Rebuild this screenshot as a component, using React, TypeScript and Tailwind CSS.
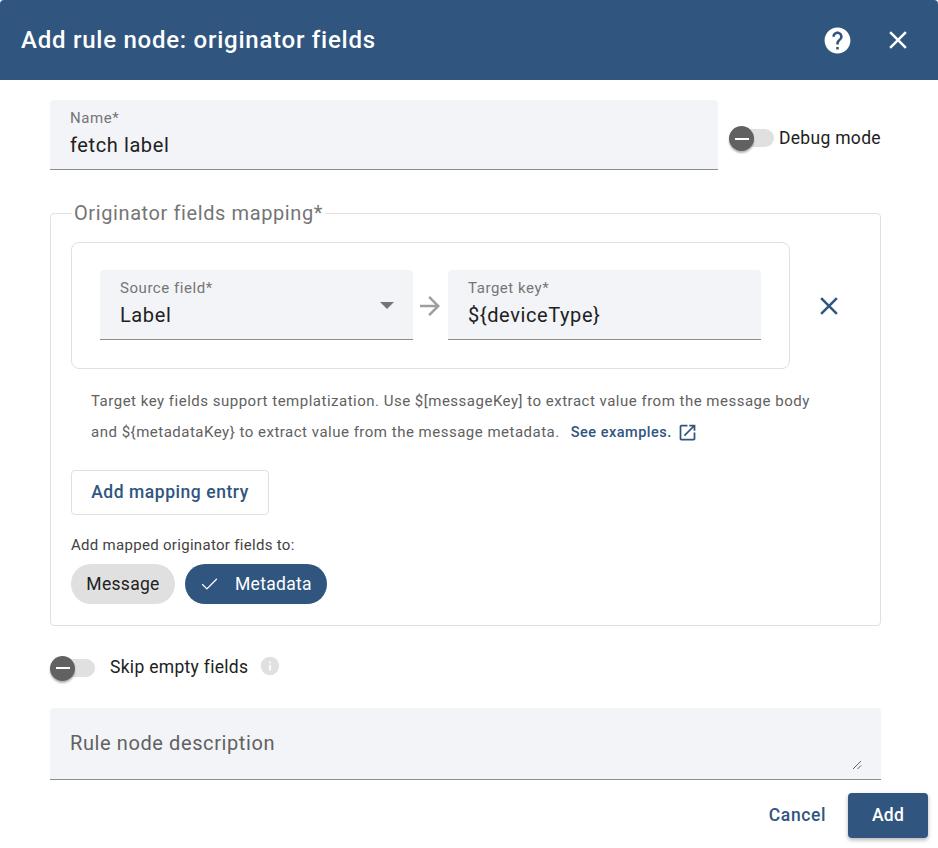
import { Check } from "lucide-react";

const roboto = "font-['Roboto',sans-serif]";

function CloseIcon({ className }: { className: string }) {
  return (
    <svg width="30" height="30" viewBox="0 0 24 24" fill="currentColor" className={className}>
      <path d="M19 6.41 17.59 5 12 10.59 6.41 5 5 6.41 10.59 12 5 17.59 6.41 19 12 13.41 17.59 19 19 17.59 13.41 12z" />
    </svg>
  );
}

function Toggle() {
  return (
    <span className="relative flex h-5 w-[45px] shrink-0 items-center">
      <span className="ml-[10px] h-[18px] w-[35px] rounded-full bg-[#e0e0e0]" />
      <span className="absolute left-0 top-[-2px] flex h-[25px] w-[25px] items-center justify-center rounded-full bg-[#616161] shadow-[0_2px_2px_rgba(0,0,0,0.3)]">
        <span className="h-[2px] w-[14px] bg-white" />
      </span>
    </span>
  );
}

function Field({
  label,
  value,
  className,
  children,
}: {
  label: string;
  value: string;
  className: string;
  children?: React.ReactNode;
}) {
  return (
    <div className={`flex shrink-0 flex-col rounded-t border-b border-[#8c8c8c] bg-[#f3f4f8] ${className}`}>
      <span className="text-[15px] leading-4 tracking-[0.55px] text-[#757575]">{label}</span>
      <span className="mt-[7px] flex items-center justify-between text-[20px] leading-6 tracking-[0.6px] text-[#212121]">
        {value}
        {children}
      </span>
    </div>
  );
}

export default function App() {
  return (
    <div className={`${roboto} flex h-[848px] w-[938px] flex-col overflow-hidden bg-white`}>
      {/* header */}
      <div className="flex h-20 shrink-0 items-center rounded-t bg-[#305680] pl-[21px] pr-[25px] text-white">
        <h1 className="flex-1 text-[24px] font-medium tracking-[0.75px]">Add rule node: originator fields</h1>
        <svg width="31" height="31" viewBox="0 0 24 24" fill="white" className="mr-[30px]">
          <path d="M12 2C6.48 2 2 6.48 2 12s4.48 10 10 10 10-4.48 10-10S17.52 2 12 2zm1 17h-2v-2h2v2zm2.07-7.75l-.9.92C13.45 12.9 13 13.5 13 15h-2v-.5c0-1.1.45-2.1 1.17-2.83l1.24-1.26c.37-.36.59-.86.59-1.41 0-1.1-.9-2-2-2s-2 .9-2 2H8c0-2.21 1.79-4 4-4s4 1.79 4 4c0 .88-.36 1.68-.93 2.25z" />
        </svg>
        <CloseIcon className="shrink-0" />
      </div>

      {/* body */}
      <div className="flex flex-1 flex-col pl-[50px] pr-[57px] pt-5">
        <div className="flex items-start">
          <Field
            label="Name*"
            value="fetch label"
            className="h-[70px] w-[668px] px-5 pt-[10px]"
          />
          <div className="ml-[11px] mt-[28px] flex shrink-0 items-center gap-[5px]">
            <Toggle />
            <span className="whitespace-nowrap text-[17.5px] leading-5 tracking-[0.3px] text-[#212121]">Debug mode</span>
          </div>
        </div>

        <fieldset className="mt-[31px] h-[425px] rounded border border-[#e0e0e0] px-5 pb-5">
          <legend className="ml-[1px] px-[2px] text-[20px] leading-6 tracking-[0.6px] text-[#757575]">
            Originator fields mapping*
          </legend>

          <div className="mt-[17px] flex items-center">
            <div className="flex h-[127px] w-[719px] items-start rounded-lg border border-[#e0e0e0] pl-[28px] pt-[27px]">
              <Field label="Source field*" value="Label" className="h-[70px] w-[313px] px-5 pt-[10px]">
                <span className="mr-[-1px] h-0 w-0 -translate-y-[10px] border-x-[7px] border-t-[7px] border-x-transparent border-t-[#757575]" />
              </Field>
              <svg width="30" height="30" viewBox="0 0 24 24" fill="#9e9e9e" className="mt-[21px] ml-[2px] mr-[3px] shrink-0">
                <path d="M12 4l-1.41 1.41L16.17 11H4v2h12.17l-5.58 5.59L12 20l8-8z" />
              </svg>
              <Field label="Target key*" value="${deviceType}" className="h-[70px] w-[313px] px-5 pt-[10px]" />
            </div>
            <CloseIcon className="ml-6 text-[#305680]" />
          </div>

          <div className="mt-[17px] pl-5 text-[15px] leading-[31px] tracking-[0.5px] text-[#616161]">
            <p>Target key fields support templatization. Use $[messageKey] to extract value from the message body</p>
            <p className="flex items-center">
              and {"${metadataKey}"} to extract value from the message metadata.
              <span className="ml-[11px] text-[14.5px] font-medium text-[#305680]">See examples.</span>
              <svg width="21" height="21" viewBox="0 0 24 24" fill="#305680" className="ml-[5px]">
                <path d="M19 19H5V5h7V3H5c-1.11 0-2 .9-2 2v14c0 1.1.89 2 2 2h14c1.1 0 2-.9 2-2v-7h-2v7zM14 3v2h3.59l-9.83 9.83 1.41 1.41L19 6.41V10h2V3h-7z" />
              </svg>
            </p>
          </div>

          <button className="mt-[22px] flex h-[45px] w-[198px] items-center justify-center rounded border border-[#e0e0e0] text-[17.5px] font-medium tracking-[0.55px] text-[#305680]">
            Add mapping entry
          </button>

          <p className="mt-[21px] text-[15px] leading-[18px] tracking-[0.3px] text-[#424242]">
            Add mapped originator fields to:
          </p>

          <div className="mt-[10px] flex gap-[10px]">
            <span className="flex h-10 w-[104px] items-center justify-center rounded-full bg-[#e0e0e0] text-[17.5px] tracking-[0.3px] text-[#212121]">
              Message
            </span>
            <span className="flex h-10 w-[142px] items-center rounded-full bg-[#305680] pl-[14px] text-[17.5px] tracking-[0.3px] text-white">
              <Check size={21} strokeWidth={1.5} />
              <span className="ml-[15px]">Metadata</span>
            </span>
          </div>
        </fieldset>

        <div className="mt-[29px] flex items-center">
          <Toggle />
          <span className="ml-[15px] mb-[2px] text-[17.5px] leading-5 tracking-[0.3px] text-[#212121]">Skip empty fields</span>
          <svg width="22" height="22" viewBox="0 0 24 24" fill="#e0e0e0" className="ml-[11px] mb-[3px]">
            <path d="M12 2C6.48 2 2 6.48 2 12s4.48 10 10 10 10-4.48 10-10S17.52 2 12 2zm1 15h-2v-6h2v6zm0-8h-2V7h2v2z" />
          </svg>
        </div>

        <div className="relative mt-[28px] flex h-[72px] shrink-0 items-center rounded-t border-b border-[#8c8c8c] bg-[#f3f4f8] px-5">
          <span className="mb-[1px] text-[20px] tracking-[0.6px] text-[#616161]">Rule node description</span>
          <svg width="10" height="10" viewBox="0 0 10 10" className="absolute bottom-[9px] right-[19px]" stroke="#616161" strokeWidth="1">
            <path d="M1 9 9 1M5.5 9 9 5.5" />
          </svg>
        </div>

        <div className="mr-[-47px] mt-[13px] flex items-center justify-end">
          <span className="text-[17.5px] font-medium tracking-[0.6px] text-[#305680]">Cancel</span>
          <button className="ml-[22px] h-[45px] w-[80px] rounded bg-[#305680] text-[17.5px] font-medium tracking-[0.3px] text-white shadow-[0_2px_4px_rgba(0,0,0,0.3)]">
            Add
          </button>
        </div>
      </div>
    </div>
  );
}
